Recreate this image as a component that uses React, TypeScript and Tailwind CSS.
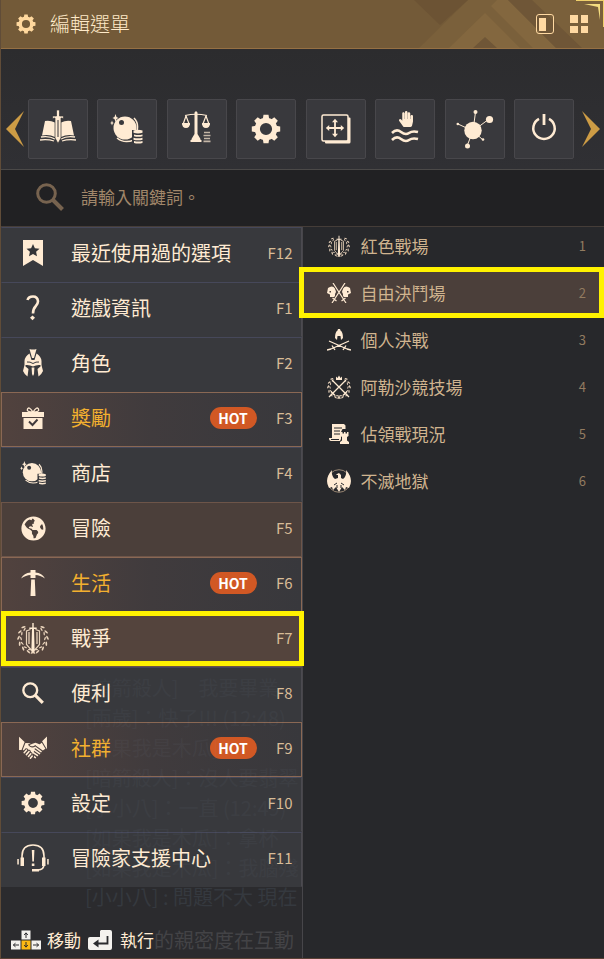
import type { ReactNode } from 'react';
import { FaGlobeAmericas, FaHandPaper } from 'react-icons/fa';
import { GiShakingHands } from 'react-icons/gi';

type IconProps = { className?: string };

const CREAM = '#ffebd3';
const ANGLES = [0, 45, 90, 135, 180, 225, 270, 315];
const LEAVES = [22, 46, 70, 94, 118, 142, 162];

function Gear({ className = '' }: IconProps) {
  return (
    <svg viewBox="0 0 30 30" className={className} fill="currentColor">
      <circle cx="15" cy="15" r="8.7" fill="none" stroke="currentColor" strokeWidth="5.2" />
      {ANGLES.map((a) => (
        <path key={a} d="M11.800 5 12.500.800h5l.7 4.200z" transform={`rotate(${a} 15 15)`} />
      ))}
    </svg>
  );
}

function SwordBook({ className = '' }: IconProps) {
  return (
    <svg viewBox="0 0 36 34" className={className} fill={CREAM}>
      <path d="M5 11q5-1 10 1.500V27Q9 24 2 25.500zM31 11q-5-1-10 1.500V27q6-3 13-1.500z" />
      <path d="M1 27q8-1.500 14 2M35 27q-8-1.500-14 2M0 30q8-1 14 1M36 30q-8-1-14 1" fill="none" stroke={CREAM} strokeWidth="1.300" />
      <path d="M16.500 0h3v6h4v2.500l-2.500-.5V28l-3 5.500-3-5.500V8l-2.500.5V6h4z" stroke="#343337" strokeWidth=".7" />
      <path d="M18 10v17" stroke="#343337" />
    </svg>
  );
}

function Pearl({ className = '' }: IconProps) {
  return (
    <svg viewBox="0 0 34 30" className={className} fill={CREAM}>
      <path d="M5.500 0 6.500 3l2 1-2 1-1 3-1-3-2-1 2-1zM2 6.500 2.700 8.500 4 9l-1.300.6L2 11.500l-.7-1.900L0 9l1.300-.5z" />
      <circle cx="15" cy="14" r="11.500" />
      <path d="M24 4q5 5 3 13M7 24q7 6 17 2" fill="none" stroke={CREAM} strokeWidth="1.500" />
      <circle cx="11.500" cy="8.500" r="2.500" fill="#39393d" />
      <path d="M22 16h11v13H22z" fill="#39393d" />
      <path d="M23.500 16.500q4.500-1.500 9 0v2.200q-4.500 1.500-9 0zM24 20.500q4.500 1 8.500 0v1.800q-4.500 1-8.500 0zM23.500 23.800q4.500 1 9 0v2q-4.500 1-9 0zM24 27q4.500 1 8.500 0v2q-4.500 1-8.500 0z" />
    </svg>
  );
}

function Scales({ className = '' }: IconProps) {
  return (
    <svg viewBox="0 0 30 32" className={className} fill={CREAM}>
      <path d="M12.500 1.500 14 0l1.500 1.500V23l3 5v3h-9v-3l3-5zM8.500 29h11v2h-11z" />
      <path d="M3 4.500Q14 2 25 4.500M4 5 .8 14M4 5l3.500 9M24 5l-3.500 9M24 5l3.300 9" fill="none" stroke={CREAM} strokeWidth="1.200" />
      <path d="M0 12h8q0 5-4 5T0 12M20 12h8q0 5-4 5t-4-5" />
      <path d="M22 21.500h6M21.500 24.500h7M22 27.500h6M21.500 30.300h7" stroke={CREAM} strokeWidth="1.700" opacity=".7" />
    </svg>
  );
}

function MoveWindow({ className = '' }: IconProps) {
  return (
    <svg viewBox="0 0 30 30" className={className} fill={CREAM}>
      <path d="M27 3.500h1.500q1 0 1 1V28q0 1.500-1.500 1.500H5q-1 0-1-1V27h23z" />
      <rect x="1" y="1" width="26" height="26" rx="1.500" fill="none" stroke={CREAM} strokeWidth="1.500" />
      <path d="M14 8v12M8 14h12" stroke={CREAM} strokeWidth="1.800" />
      <path d="m14 4.800 3 3.400h-6zM14 23.200l3-3.400h-6zM4.800 14l3.400-3v6zM23.200 14l-3.400-3v6z" />
    </svg>
  );
}

function HandWaves({ className = '' }: IconProps) {
  return (
    <svg viewBox="0 0 28 32" className={className}>
      <FaHandPaper x={7} y={0} width={14} height={17} color={CREAM} />
      <path d="M1 22q4.500-4.500 9-1t8 1 9-1M1 29q4.500-4.500 9-1t8 1 9-1" fill="none" stroke={CREAM} strokeWidth="2.600" />
    </svg>
  );
}

function Nodes({ className = '' }: IconProps) {
  return (
    <svg viewBox="0 0 38 40" className={className} fill={CREAM}>
      <path d="m17 22 2.500-19M17 22 33 10M17 22 2 15M17 22l10 9M17 22l-6 15" stroke={CREAM} />
      <circle cx="17" cy="21.500" r="8.700" />
      <circle cx="19.500" cy="3" r="2" />
      <circle cx="33.500" cy="10.500" r="3.600" />
      <circle cx="1.800" cy="15" r="1.300" />
      <circle cx="27" cy="30.500" r="1.300" />
      <circle cx="11.500" cy="37" r="2.500" />
    </svg>
  );
}

function Power({ className = '' }: IconProps) {
  return (
    <svg viewBox="0 0 26 28" className={className} fill="none" stroke={CREAM} strokeWidth="2.500">
      <path d="M8 5.800a10.700 10.700 0 1 0 10 0" />
      <path d="M13 1v11" strokeWidth="2.800" />
    </svg>
  );
}

function Magnifier({ className = '' }: IconProps) {
  return (
    <svg viewBox="0 0 28 28" className={className} fill="none" stroke="currentColor">
      <circle cx="10.500" cy="10.500" r="8.800" strokeWidth="3" />
      <path d="m17 17 9.500 9.500" strokeWidth="4" />
    </svg>
  );
}

function Bookmark() {
  return (
    <svg viewBox="0 0 20 26" className="h-[26px] w-5" fill={CREAM}>
      <path d="M0 0h20v26l-10-6-10 6z" />
      <path d="m10 4 1.900 4.200 4.600.5-3.400 3.100.9 4.500-4-2.300-4 2.300.9-4.500-3.400-3.100 4.600-.5z" fill="#343437" />
    </svg>
  );
}

function Question() {
  return (
    <svg viewBox="0 0 14 26" className="h-[26px] w-3.5">
      <path d="M1.500 5Q2.500 1.500 7 1.500t5 4.700Q12 9 9.500 11.500T7 18.500" fill="none" stroke={CREAM} strokeWidth="2.600" />
      <path d="m6.500 20.500 2.500 2.300-2.500 2.500L4 22.800z" fill={CREAM} />
    </svg>
  );
}

// front view: crest, dome, brow slit and the two cheek guards
function Helmet({ className = 'h-7 w-5' }: IconProps) {
  return (
    <svg viewBox="0 0 20 28" className={className} fill={CREAM}>
      <path d="M6.500 0q3.500 1 7 0L11 9H9z" />
      <path d="M6.500 4.500 8.500 11h3l2-6.500Q18 7 18.500 12v4l1.500 6q-1.500 3.500-4.500 5.500l-1-7.500 3-2.500V16q-4-.5-7.500 1.500Q6.500 15.500 2.500 16v1.500l3 2.500-1 7.500Q1.500 25.500 0 22l1.500-6v-4Q2 7 6.500 4.500z" />
      <path d="M8.600 18.500h2.800L11 25l-1 2-1-2z" />
      <path d="M4 13q3-.5 6 1.500 3-2 6-1.500" fill="none" stroke="#39393d" />
    </svg>
  );
}

function Gift() {
  return (
    <svg viewBox="0 0 22 22" className="size-[22px]" fill={CREAM}>
      <path d="M11 5Q7-1 5.500 2T11 5q4-6 5.500-3T11 5" fill="none" stroke={CREAM} strokeWidth="1.300" />
      <path d="M0 5h22v5H0zM1.500 11h19v11h-19z" />
      <path d="m7 14.500 3.500 3.500 5-5.500" fill="none" stroke="#41393a" strokeWidth="1.900" />
    </svg>
  );
}

function Pickaxe() {
  return (
    <svg viewBox="0 0 24 26" className="h-[26px] w-6" fill={CREAM}>
      <path d="M9.500 0h5v2.500Q21 3 24 8.500q-5-3.500-9.500-3.500V8h-5V5Q5 5 0 8.500 3 3 9.500 2.500zM10.200 9.500h3.600L14.500 26h-5z" />
    </svg>
  );
}

// wreath of leaves, mirrored on both sides of whatever stands in the middle
function Laurel({ className = '', children }: { className?: string; children?: ReactNode }) {
  return (
    <svg viewBox="0 0 32 32" className={className} fill="#e9d3bb">
      {[1, -1].map((side) => (
        <g key={side} transform={`translate(16 16) scale(${side} 1)`}>
          {LEAVES.map((a) => (
            <g key={a} transform={`rotate(${a + 16})`}>
              <ellipse cx="1" cy="-14.500" rx="2.200" ry=".9" transform="rotate(-22 1 -14)" />
              <ellipse cx="1" cy="-12" rx="1.900" ry=".7" transform="rotate(22 1 -11)" />
            </g>
          ))}
        </g>
      ))}
      {children}
    </svg>
  );
}

function WarCrest({ className = '' }: IconProps) {
  return (
    <Laurel className={className}>
      <path d="M13.500 7.500 9.500 9v13.500L16 30l6.500-7.500V9l-4-1.500" fill="none" stroke="#e9d3bb" strokeWidth="1.200" />
      <path d="M15.300 1h1.400v4.500h3V7H17l.6 20L16 31l-1.600-4L15 7h-2.700V5.500h3z" fill={CREAM} />
      <path d="M12 10v12M20 10v12" stroke="#e9d3bb" strokeWidth="1.300" />
    </Laurel>
  );
}

function Headset() {
  return (
    <svg viewBox="0 0 32 28" className="h-7 w-8" fill={CREAM}>
      <path d="M5 18V12Q5 1 16 1t11 11v8q0 6-6 6" fill="none" stroke={CREAM} strokeWidth="1.600" />
      <path d="M3.500 13.500H7V22H3.500zM25 13.500h3.500V22H25zM.3 15h1.500v5.500H.3zM30.200 15h1.500v5.500h-1.500zM15 25h7v2.500h-7zM14.800 6h2.600l-.5 11.500h-1.600zM14.800 19.500h2.600V22h-2.600z" />
    </svg>
  );
}

function SkullDuel() {
  return (
    <svg viewBox="0 0 24 20" className="h-5 w-6" fill={CREAM}>
      <path d="M1 5q4-3 7 0l1 4-1 2v3H3v-2.500L0 10zM23 5q-4-3-7 0l-1 4 1 2v3h5v-2.500l3-1.500z" />
      <path d="m6 0 11 17M18 0 7 17" stroke="#4b3f3a" strokeWidth="3" />
      <path d="m6 0 11 17M18 0 7 17M5.500 15l4 3M18.500 15l-4 3M7 17l-2 3M17 17l2 3" stroke={CREAM} strokeWidth="1.200" />
      <path d="M2.500 8H4v1.500H2.500zM20 8h1.500v1.500H20z" fill="#4b3f3a" />
    </svg>
  );
}

function HelmetDuel() {
  return (
    <svg viewBox="0 0 24 22" className="h-[22px] w-6" fill={CREAM}>
      <path d="M11 0h2l.5 1.500Q16 3 16 9l-2 2-.5-4h-3L10 11 8 9q0-6 2.500-7.500z" />
      <path d="m2 12 18 8M22 12 4 20M5 16.500l3 4.500M19 16.500 16 21M4 20l-4 1M20 20l4 1" stroke={CREAM} strokeWidth="1.300" />
    </svg>
  );
}

function ArenaCrest() {
  return (
    <svg viewBox="0 0 24 24" className="size-6">
      <Laurel />
      <path d="M9 1.500 10.500 3 12 .5 13.500 3 15 1.500V5H9z" fill={CREAM} />
      <path d="m5 5 15 15M19 5 4 20M4 16.500l4 4M20 16.500l-4 4M4 20l-2 2M20 20l2 2" stroke={CREAM} strokeWidth="1.300" />
    </svg>
  );
}

function ScrollRook() {
  return (
    <svg viewBox="0 0 20 20" className="size-5" fill={CREAM}>
      <path d="M3 0h12l1.500 1.500V5h-3L12 8v7l-1 2H2Q0 17 0 14h3z" />
      <path d="M5 4h8M5 7h6M5 10h6M2 15.500h8" stroke="#27282b" />
      <path d="M12 8h1.500v1.500H15V8h1.500v1.500H18V8h1.500v4l-1.500 1v3.500l2 1.500v2h-9v-2l2-1.500V13L11.500 12z" />
    </svg>
  );
}

function Eagle() {
  return (
    <svg viewBox="0 0 24 24" className="size-6" fill={CREAM}>
      <circle cx="12" cy="12" r="11.300" fill="none" stroke="#b29c84" strokeWidth=".8" />
      <path d="M5 1q-8 9-3 18l3-1 1 3 3-3 3 5 3-5 3 3 1-3 3 1Q27 10 19 1q1 6-3 9l-2-1V6l-2-2-2 1-1 1h2v3l-3 1Q4 7 5 1z" />
      <path d="m7 16 3-2M17 16l-3-2M10 19v-3M14 19v-3" stroke="#27282b" />
    </svg>
  );
}

const TOOLS = [
  { label: '遊戲資訊', icon: <SwordBook className="-mt-1 h-[34px] w-9" /> },
  { label: '商店', icon: <Pearl className="h-[30px] w-[34px]" /> },
  { label: '市場', icon: <Scales className="-mt-1 h-8 w-[30px]" /> },
  { label: '設定', icon: <Gear className="size-[30px] text-[#ffebd3]" /> },
  { label: '移動', icon: <MoveWindow className="size-[30px]" /> },
  { label: '便利', icon: <HandWaves className="-mt-1 h-8 w-7" /> },
  { label: '社群', icon: <Nodes className="h-10 w-[38px]" /> },
  { label: '結束', icon: <Power className="-mt-1 h-7 w-[26px]" /> },
];

type MenuItem = {
  label: string;
  hotkey: string;
  icon: ReactNode;
  hot?: boolean;
  warm?: boolean;
  selected?: boolean;
};

const MENU: MenuItem[] = [
  { label: '最近使用過的選項', hotkey: 'F12', icon: <Bookmark /> },
  { label: '遊戲資訊', hotkey: 'F1', icon: <Question /> },
  { label: '角色', hotkey: 'F2', icon: <Helmet /> },
  { label: '獎勵', hotkey: 'F3', icon: <Gift />, hot: true },
  { label: '商店', hotkey: 'F4', icon: <Pearl className="h-6 w-[27px]" /> },
  { label: '冒險', hotkey: 'F5', icon: <FaGlobeAmericas className="size-[25px]" />, warm: true },
  { label: '生活', hotkey: 'F6', icon: <Pickaxe />, hot: true },
  { label: '戰爭', hotkey: 'F7', icon: <WarCrest className="size-8" />, selected: true },
  { label: '便利', hotkey: 'F8', icon: <Magnifier className="size-[22px]" /> },
  { label: '社群', hotkey: 'F9', icon: <GiShakingHands className="size-[30px]" />, hot: true },
  { label: '設定', hotkey: 'F10', icon: <Gear className="size-6" /> },
  { label: '冒險家支援中心', hotkey: 'F11', icon: <Headset /> },
];

const SUBMENU = [
  { label: '紅色戰場', icon: <WarCrest className="size-[22px]" /> },
  { label: '自由決鬥場', icon: <SkullDuel />, selected: true },
  { label: '個人決戰', icon: <HelmetDuel /> },
  { label: '阿勒沙競技場', icon: <ArenaCrest /> },
  { label: '佔領戰現況', icon: <ScrollRook /> },
  { label: '不滅地獄', icon: <Eagle /> },
];

const CHAT = [
  '[暗箭殺人]　我要畢業',
  '[兩歲]：快了!!! (12:48)',
  '[如果我是木瓜]：',
  '[暗箭殺人]：沒人要翡翠',
  '[小小八]：一直 (12:49)',
  '[如果我是木瓜]：拿杯',
  '[如果我是木瓜]：我腦殘',
];

function rowStyle({ hot, warm, selected }: MenuItem) {
  if (selected) return 'border-[#6d5247] bg-[#54443d]';
  if (hot) return 'border-[#8a6854] bg-linear-to-r from-[#51423e] via-[#403b3d] to-[#38383c]';
  if (warm) return 'border-[#6d5549] bg-[#4b3f3a]';
  return 'border-transparent border-t-[#46485a] border-r-[#4b4a50] bg-[#38393d]';
}

function Header() {
  return (
    <header className="relative flex h-[49px] items-center border-b border-[#957044] bg-[#735a38] pr-4 pl-[15px]">
      <svg viewBox="0 0 190 48" className="absolute top-0 right-0 h-12 w-[190px]">
        <path d="M5 48 54 0h136v48z" fill="#7a603b" />
        <path d="M0 0h54L26 25z" fill="#6c5334" />
        <path d="m35 48 36-35 35 35zM77 6l6-6h11l48 48h-23z" fill="#83673f" />
        <path d="m59 48 12-11 12 11zM94 0h24l50 48h-26z" fill="#6f5637" />
        <path d="M162 0h28v27h-1V1h-27z" fill="#f0d06a" />
        <path d="M170 4h16v16l-2-13z" fill="#f5dd80" />
      </svg>
      <Gear className="size-5 text-[#ffd89e]" />
      <h1 className="ml-3.5 text-[20px] leading-6 font-light text-[#ffeac9]">編輯選單</h1>
      <button aria-label="側欄" className="relative ml-auto h-5 w-[18px] rounded-[3px] border border-[#ffd9a2] p-0.5">
        <span className="block h-[13px] w-[7px] bg-[#ffd9a2]" />
      </button>
      <button aria-label="格狀" className="relative ml-4 grid size-[18px] grid-cols-2 gap-[3px]">
        {[0, 1, 2, 3].map((i) => (
          <span key={i} className="bg-[#ffd9a2]" />
        ))}
      </button>
    </header>
  );
}

function Toolbar() {
  return (
    <nav className="flex h-[120px] items-center justify-between bg-linear-to-b from-[#2c2c2e] to-[#303034] pt-10 pr-1 pl-[5px]">
      <button aria-label="上一頁" className="text-[#cd9c45]">
        <svg viewBox="0 0 18 36" className="h-9 w-[18px]" fill="currentColor">
          <path d="M18 0 0 18l18 18L9 18z" />
        </svg>
      </button>
      <div className="mr-2 ml-1 flex flex-1 items-center justify-between">
        {TOOLS.map((tool) => (
          <button
            key={tool.label}
            aria-label={tool.label}
            className="flex size-[60px] items-center justify-center rounded-xs border border-[#48474b] bg-[#39393d]"
          >
            {tool.icon}
          </button>
        ))}
      </div>
      <button aria-label="下一頁" className="text-[#cd9c45]">
        <svg viewBox="0 0 18 36" className="h-9 w-[18px]" fill="currentColor">
          <path d="m0 0 18 18L0 36l9-18z" />
        </svg>
      </button>
    </nav>
  );
}

function KeyHints() {
  return (
    <footer className="flex h-9 items-center overflow-hidden pl-[10px] text-[17px] leading-6 whitespace-nowrap text-[#ffebd3]">
      <svg viewBox="0 0 30 20" className="h-5 w-[30px] shrink-0" fill="#f4f2ee">
        <path d="M10.500.5h9v9h-9zM0 10.500h9.500v9H0zM20.500 10.500H30v9h-9.500z" />
        <path d="M10.500 10.500h9v9h-9z" fill="#fdb913" />
        <path d="M15 8V3m-1.800 2L15 2.800 16.800 5M8 15H2.500m2-1.800L2.300 15l2.200 1.800M22 15h5.500m-2-1.800 2.200 1.800-2.200 1.800M15 12v5m-1.800-2 1.800 2.200 1.800-2.200" fill="none" stroke="#2b2b2e" />
      </svg>
      <span className="ml-1.5">移動</span>
      <svg viewBox="0 0 24 20" className="ml-[7px] h-5 w-6 shrink-0" fill="#f4f2ee">
        <path d="M13 0h9q2 0 2 2v16q0 2-2 2H2q-2 0-2-2V9q0-2 2-2h10V1z" />
        <path d="M19.500 6v7.500H7" fill="none" stroke="#2b2b2e" strokeWidth="1.800" />
        <path d="m5 13.500 5.500-4v8z" fill="#2b2b2e" />
      </svg>
      <span className="ml-2">執行</span>
      <span className="text-[20px] text-[#434346]">的親密度在互動</span>
    </footer>
  );
}

export default function App() {
  return (
    <div className="flex min-h-screen flex-col overflow-hidden border-b border-l border-b-[#5a4035] border-l-[#604c38] bg-[#2b2b2e] font-['Noto_Sans_CJK_TC',sans-serif]">
      <Header />
      <Toolbar />
      <label className="flex h-[57px] items-center border-t border-[#4b4948] bg-[#212123] pb-0.5 pl-[35px] text-[#77634f]">
        <Magnifier className="size-7" />
        <input
          type="search"
          aria-label="搜尋"
          placeholder="請輸入關鍵詞。"
          className="ml-[17px] min-w-0 flex-1 bg-transparent text-[17px] leading-6 text-[#ffebd3] outline-none placeholder:text-[#a1876a]"
        />
      </label>
      <main className="flex flex-1 border-t border-[#453d38]">
        <section className="relative flex w-1/2 flex-col border-r border-[#47464a]">
          <ul>
            {MENU.map((item) => (
              <li key={item.label} className="relative">
                <button className={'flex h-[55px] w-full items-center border pr-2 pb-[3px] pl-px text-left text-[#ffebd3] ' + rowStyle(item)}>
                  <span className="flex w-[60px] shrink-0 items-center justify-center">{item.icon}</span>
                  <span className={'ml-2 text-[20px] leading-6 ' + (item.hot ? 'text-[#f3b02f]' : '')}>
                    {item.label}
                  </span>
                  {item.hot && (
                    <span className="ml-auto flex h-[22px] w-[47px] items-center justify-center rounded-full bg-[#d15824] text-[14px] leading-5 font-bold text-white">
                      HOT
                    </span>
                  )}
                  <span className={'text-right text-[15px] leading-5 text-[#d8bc97] ' + (item.hot ? 'w-9' : 'ml-auto')}>
                    {item.hotkey}
                  </span>
                </button>
                {item.selected && (
                  <span className="pointer-events-none absolute -top-px -right-0.5 bottom-px left-0 z-10 border-5 border-[#fff200]" />
                )}
              </li>
            ))}
          </ul>
          <p aria-hidden="true" className="h-[35px] overflow-hidden pl-[84px] text-[20px] leading-5 whitespace-nowrap text-[#35393f]">
            [小小八] : 問題不大 現在
          </p>
          <KeyHints />
          {/* chat log showing faintly through the panel */}
          <div aria-hidden="true" className="pointer-events-none absolute inset-x-0 top-[446px] overflow-hidden pl-[84px] text-[20px] leading-[30px] whitespace-nowrap text-[#8fa0b8] opacity-5">
            {CHAT.map((line, i) => (
              <p key={i}>{line}</p>
            ))}
          </div>
        </section>
        <section className="flex-1 bg-[#27282b]">
          <ul className="-mt-[5px]">
            {SUBMENU.map((item, i) => (
              <li key={item.label} className="relative">
                <button
                  className={
                    'flex h-[47px] w-full items-center pr-[18px] pl-6 text-left text-[#ffebd3] ' +
                    (item.selected ? 'bg-[#4b3f3a]' : '')
                  }
                >
                  <span className="flex w-6 shrink-0 justify-center">{item.icon}</span>
                  <span className="ml-2.5 text-[17px] leading-6 text-[#d0b48f]">{item.label}</span>
                  <span className="ml-auto text-[13px] leading-5 text-[#927b60]">{i + 1}</span>
                </button>
                {item.selected && (
                  <span className="pointer-events-none absolute -inset-y-0.5 right-0 -left-1 z-10 border-5 border-[#fff200]" />
                )}
              </li>
            ))}
          </ul>
        </section>
      </main>
    </div>
  );
}
